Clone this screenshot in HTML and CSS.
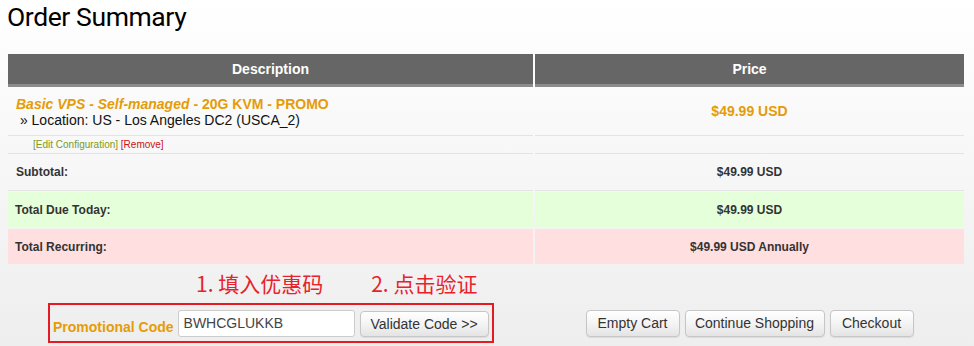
FILE: index.html
```html
<!DOCTYPE html>
<html lang="en">
<head>
<meta charset="utf-8">
<title>Order Summary</title>
<link rel="stylesheet" href="styles.css">
</head>
<body>
<div class="page">
  <h1 class="title">Order Summary</h1>
  <div class="cart">
    <div class="cell head">Description</div>
    <div class="cell head">Price</div>

    <div class="cell product">
      <div class="pname"><em>Basic VPS - Self-managed</em> - 20G KVM - PROMO</div>
      <div class="popt">&nbsp;» Location: US - Los Angeles DC2 (USCA_2)</div>
    </div>
    <div class="cell product price">$49.99 USD</div>

    <div class="cell config"><span class="edit">[Edit Configuration]</span> <span class="remove">[Remove]</span></div>
    <div class="cell config"></div>

    <div class="cell sub label">Subtotal:</div>
    <div class="cell sub amount">$49.99 USD</div>

    <div class="cell due label">Total Due Today:</div>
    <div class="cell due amount">$49.99 USD</div>

    <div class="cell rec label">Total Recurring:</div>
    <div class="cell rec amount">$49.99 USD Annually</div>
  </div>

  <div class="footer">
    <div class="promo-col">
      <div class="notes">
        <span class="note">1. 填入优惠码</span>
        <span class="note">2. 点击验证</span>
      </div>
      <div class="promo-box">
        <span class="promo-label">Promotional Code</span>
        <input class="promo-input" type="text" value="BWHCGLUKKB">
        <button class="btn validate" type="button">Validate Code &gt;&gt;</button>
      </div>
    </div>
    <div class="actions">
      <button class="btn btn-empty" type="button">Empty Cart</button>
      <button class="btn btn-continue" type="button">Continue Shopping</button>
      <button class="btn btn-checkout" type="button">Checkout</button>
    </div>
  </div>
</div>
</body>
</html>
```
FILE: styles.css
```css
html, body {
  margin: 0;
  padding: 0;
}
body {
  width: 974px;
  height: 346px;
  overflow: hidden;
  background: linear-gradient(to bottom, #ffffff 0%, #eeeeee 100%);
  font-family: "Liberation Sans", Arial, sans-serif;
  color: #333;
}
.page {
  padding: 0 10px 0 8px;
}
.title {
  margin: 0 0 20px -1px;
  font-family: Roboto, "Open Sans", sans-serif;
  font-weight: 400;
  font-size: 26.5px;
  line-height: 34px;
  letter-spacing: -0.4px;
  color: #000;
  white-space: nowrap;
}
.cart {
  display: grid;
  grid-template-columns: 525px 429px;
  column-gap: 2px;
  width: 956px;
}
.cell {
  box-sizing: border-box;
}
.head {
  height: 33px;
  background: #666666;
  border-bottom: 3px solid #8c8c8c;
  color: #fff;
  font-weight: bold;
  font-size: 14px;
  line-height: 30px;
  text-align: center;
}
.product {
  height: 49px;
  border-bottom: 1px solid #e4e4e4;
  padding: 9px 0 0 8px;
  font-size: 14px;
  line-height: 16px;
}
.pname {
  color: #e59c06;
  font-weight: bold;
}
.pname em {
  font-style: italic;
}
.popt {
  color: #111;
}
.price {
  padding: 0;
  display: flex;
  align-items: center;
  justify-content: center;
  color: #e59c06;
  font-weight: bold;
}
.config {
  height: 18px;
  border-bottom: 1px solid #e4e4e4;
  padding-left: 25px;
  font-size: 10px;
  line-height: 17px;
  white-space: nowrap;
}
.edit { color: #7b9b22; }
.remove { color: #cc1111; }
.sub {
  height: 37px;
  border-bottom: 1px solid #e4e4e4;
  margin-bottom: 1px;
}
.label, .amount {
  display: flex;
  align-items: center;
  font-size: 12px;
  font-weight: bold;
  color: #333;
}
.label {
  padding-left: 8px;
}
.amount {
  justify-content: center;
}
.due {
  height: 35px;
  background: #e4ffda;
  margin-bottom: 2px;
  padding-left: 7px;
}
.due.amount, .rec.amount { padding-left: 0; }
.rec {
  height: 35px;
  background: #ffdfdf;
  padding-left: 7px;
}
.footer {
  display: grid;
  grid-template-columns: 525px 429px;
  column-gap: 2px;
  width: 956px;
}
.promo-col {
  display: flex;
  flex-direction: column;
  align-items: center;
}
.notes {
  align-self: stretch;
  display: flex;
  gap: 48px;
  padding: 7px 0 0 188px;
  height: 24px;
  margin-bottom: 8px;
}
.note {
  font-family: "Noto Sans CJK SC", "Microsoft YaHei", sans-serif;
  font-size: 21px;
  line-height: 24px;
  color: #e8222c;
  white-space: nowrap;
}
.promo-box {
  box-sizing: border-box;
  width: 446px;
  height: 40px;
  margin-left: 1px;
  border: 2px solid #e51a22;
  display: flex;
  align-items: flex-start;
  gap: 4px;
  padding: 5px 4px 0 3px;
}
.promo-label {
  flex: 0 0 auto;
  white-space: nowrap;
  margin-top: 9px;
  font-size: 14px;
  line-height: 16px;
  font-weight: bold;
  color: #e59c06;
}
.promo-input {
  flex: 0 0 177px;
  box-sizing: border-box;
  width: 177px;
  height: 27px;
  margin: 0;
  border: 1px solid #cccccc;
  border-radius: 3px;
  background: #fff;
  padding: 0 0 2px 5px;
  font-family: "Liberation Sans", Arial, sans-serif;
  font-size: 14px;
  color: #444;
  outline: none;
}
.btn {
  flex: 0 0 auto;
  box-sizing: border-box;
  height: 27px;
  margin: 0;
  padding: 0 6px;
  border: 1px solid #c6c6c6;
  border-radius: 4px;
  background: linear-gradient(to bottom, #ffffff 0%, #f4f4f4 50%, #e4e4e4 100%);
  box-shadow: 0 1px 1px rgba(0,0,0,0.08);
  font-family: "Liberation Sans", Arial, sans-serif;
  font-size: 14px;
  color: #333;
  line-height: 25px;
  white-space: nowrap;
  text-align: center;
}
.validate {
  width: 129px;
  height: 26px;
  margin-top: 1px;
  margin-left: 1px;
}
.btn-empty { width: 94px; }
.btn-continue { width: 140px; }
.btn-checkout { width: 84px; }
.actions {
  display: flex;
  justify-content: center;
  align-items: flex-start;
  gap: 5px;
  padding-top: 46px;
}
```
